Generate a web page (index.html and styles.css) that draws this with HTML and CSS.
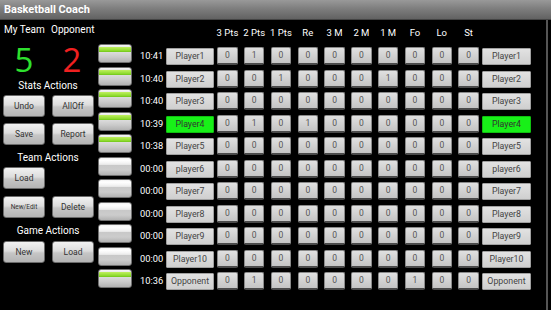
FILE: index.html
```html
<!DOCTYPE html>
<html>
<head>
<meta charset="utf-8">
<link rel="stylesheet" href="styles.css">
</head>
<body>
<div class="titlebar">Basketball Coach</div>
<div class="main">
  <div class="left">
    <div class="labels"><span>My Team</span><span>Opponent</span></div>
    <div class="scores"><span class="my">5</span><span class="opp">2</span></div>
    <div class="sec sec-stats">Stats Actions</div>
    <div class="btn-row"><div class="btn">Undo</div><div class="btn">AllOff</div></div>
    <div class="btn-row gap6"><div class="btn">Save</div><div class="btn">Report</div></div>
    <div class="sec sec-team">Team Actions</div>
    <div class="btn-row"><div class="btn">Load</div></div>
    <div class="btn-row gap7"><div class="btn small">New/Edit</div><div class="btn">Delete</div></div>
    <div class="sec sec-game">Game Actions</div>
    <div class="btn-row"><div class="btn">New</div><div class="btn">Load</div></div>
  </div>
  <div class="table">
    <div class="row head">
      <div class="blank3"></div>
      <div class="h">3 Pts</div><div class="h">2 Pts</div><div class="h">1 Pts</div><div class="h">Re</div><div class="h">3 M</div><div class="h">2 M</div><div class="h">1 M</div><div class="h">Fo</div><div class="h">Lo</div><div class="h">St</div>
      <div></div>
    </div>
    <div class="row"><div class="tg on"></div><div class="time">10:41</div><div class="pb">Player1</div><div class="sc"><span>0</span></div><div class="sc"><span>1</span></div><div class="sc"><span>0</span></div><div class="sc"><span>0</span></div><div class="sc"><span>0</span></div><div class="sc"><span>0</span></div><div class="sc"><span>0</span></div><div class="sc"><span>0</span></div><div class="sc"><span>0</span></div><div class="sc"><span>0</span></div><div class="pb right">Player1</div></div>
    <div class="row"><div class="tg on"></div><div class="time">10:40</div><div class="pb">Player2</div><div class="sc"><span>0</span></div><div class="sc"><span>0</span></div><div class="sc"><span>1</span></div><div class="sc"><span>0</span></div><div class="sc"><span>0</span></div><div class="sc"><span>0</span></div><div class="sc"><span>1</span></div><div class="sc"><span>0</span></div><div class="sc"><span>0</span></div><div class="sc"><span>0</span></div><div class="pb right">Player2</div></div>
    <div class="row"><div class="tg on"></div><div class="time">10:40</div><div class="pb">Player3</div><div class="sc"><span>0</span></div><div class="sc"><span>0</span></div><div class="sc"><span>0</span></div><div class="sc"><span>0</span></div><div class="sc"><span>0</span></div><div class="sc"><span>0</span></div><div class="sc"><span>0</span></div><div class="sc"><span>0</span></div><div class="sc"><span>0</span></div><div class="sc"><span>0</span></div><div class="pb right">Player3</div></div>
    <div class="row"><div class="tg on"></div><div class="time">10:39</div><div class="pb active">Player4</div><div class="sc"><span>0</span></div><div class="sc"><span>1</span></div><div class="sc"><span>0</span></div><div class="sc"><span>1</span></div><div class="sc"><span>0</span></div><div class="sc"><span>0</span></div><div class="sc"><span>0</span></div><div class="sc"><span>0</span></div><div class="sc"><span>0</span></div><div class="sc"><span>0</span></div><div class="pb right active">Player4</div></div>
    <div class="row"><div class="tg on"></div><div class="time">10:38</div><div class="pb">Player5</div><div class="sc"><span>0</span></div><div class="sc"><span>0</span></div><div class="sc"><span>0</span></div><div class="sc"><span>0</span></div><div class="sc"><span>0</span></div><div class="sc"><span>0</span></div><div class="sc"><span>0</span></div><div class="sc"><span>0</span></div><div class="sc"><span>0</span></div><div class="sc"><span>0</span></div><div class="pb right">Player5</div></div>
    <div class="row"><div class="tg"></div><div class="time">00:00</div><div class="pb">player6</div><div class="sc"><span>0</span></div><div class="sc"><span>0</span></div><div class="sc"><span>0</span></div><div class="sc"><span>0</span></div><div class="sc"><span>0</span></div><div class="sc"><span>0</span></div><div class="sc"><span>0</span></div><div class="sc"><span>0</span></div><div class="sc"><span>0</span></div><div class="sc"><span>0</span></div><div class="pb right">player6</div></div>
    <div class="row"><div class="tg"></div><div class="time">00:00</div><div class="pb">Player7</div><div class="sc"><span>0</span></div><div class="sc"><span>0</span></div><div class="sc"><span>0</span></div><div class="sc"><span>0</span></div><div class="sc"><span>0</span></div><div class="sc"><span>0</span></div><div class="sc"><span>0</span></div><div class="sc"><span>0</span></div><div class="sc"><span>0</span></div><div class="sc"><span>0</span></div><div class="pb right">Player7</div></div>
    <div class="row"><div class="tg"></div><div class="time">00:00</div><div class="pb">Player8</div><div class="sc"><span>0</span></div><div class="sc"><span>0</span></div><div class="sc"><span>0</span></div><div class="sc"><span>0</span></div><div class="sc"><span>0</span></div><div class="sc"><span>0</span></div><div class="sc"><span>0</span></div><div class="sc"><span>0</span></div><div class="sc"><span>0</span></div><div class="sc"><span>0</span></div><div class="pb right">Player8</div></div>
    <div class="row"><div class="tg"></div><div class="time">00:00</div><div class="pb">Player9</div><div class="sc"><span>0</span></div><div class="sc"><span>0</span></div><div class="sc"><span>0</span></div><div class="sc"><span>0</span></div><div class="sc"><span>0</span></div><div class="sc"><span>0</span></div><div class="sc"><span>0</span></div><div class="sc"><span>0</span></div><div class="sc"><span>0</span></div><div class="sc"><span>0</span></div><div class="pb right">Player9</div></div>
    <div class="row"><div class="tg"></div><div class="time">00:00</div><div class="pb">Player10</div><div class="sc"><span>0</span></div><div class="sc"><span>0</span></div><div class="sc"><span>0</span></div><div class="sc"><span>0</span></div><div class="sc"><span>0</span></div><div class="sc"><span>0</span></div><div class="sc"><span>0</span></div><div class="sc"><span>0</span></div><div class="sc"><span>0</span></div><div class="sc"><span>0</span></div><div class="pb right">Player10</div></div>
    <div class="row"><div class="tg on"></div><div class="time">10:36</div><div class="pb">Opponent</div><div class="sc"><span>0</span></div><div class="sc"><span>1</span></div><div class="sc"><span>0</span></div><div class="sc"><span>0</span></div><div class="sc"><span>0</span></div><div class="sc"><span>0</span></div><div class="sc"><span>0</span></div><div class="sc"><span>1</span></div><div class="sc"><span>0</span></div><div class="sc"><span>0</span></div><div class="pb right">Opponent</div></div>
  </div>
</div>
</body>
</html>
```
FILE: styles.css
```css
html, body {
  margin: 0;
  padding: 0;
  background: #000;
}
body {
  width: 551px;
  height: 310px;
  overflow: hidden;
  font-family: Roboto, "Open Sans", sans-serif;
  color: #fff;
}
.titlebar {
  height: 20px;
  box-sizing: border-box;
  padding-left: 4px;
  line-height: 19px;
  font-size: 11px;
  font-weight: bold;
  color: #fff;
  background: linear-gradient(to bottom, #999 0%, #7e7e7e 45%, #626262 100%);
  border-bottom: 1px solid #444;
}
.main {
  display: flex;
  width: 548px;
  height: 290px;
  border-right: 2px solid #555;
  box-sizing: border-box;
}
.left {
  width: 98px;
  flex: none;
  display: flex;
  flex-direction: column;
}
.labels {
  height: 23px;
  display: grid;
  grid-template-columns: 47px 47px;
  padding-left: 4px;
  line-height: 20px;
  font-size: 10px;
  color: #fff;
}
.scores {
  height: 34px;
  display: grid;
  grid-template-columns: 48px 48px;
  text-align: center;
  font-family: "Open Sans", sans-serif;
  font-size: 33px;
  line-height: 34px;
}
.my { color: #2ee02e; }
.opp { color: #f02020; }
.sec {
  font-size: 10px;
  text-align: center;
  width: 96px;
  color: #fff;
}
.sec-stats { height: 18px; line-height: 18px; }
.sec-team { height: 17px; padding-top: 5px; line-height: 16px; }
.sec-game { height: 18px; padding-top: 5px; line-height: 16px; }
.btn-row {
  display: flex;
  gap: 7px;
  padding-left: 3px;
}
.gap6 { margin-top: 6px; }
.gap7 { margin-top: 7px; }
.btn {
  width: 42px;
  height: 22px;
  box-sizing: border-box;
  border-radius: 3px;
  border: 1px solid #6a6a6a;
  background: linear-gradient(to bottom, #f2f2f2 0%, #dcdcdc 45%, #c6c6c6 55%, #b4b4b4 100%);
  color: #333;
  font-size: 8.5px;
  line-height: 20px;
  text-align: center;
}
.btn.small { font-size: 6.5px; }
.table {
  display: flex;
  flex-direction: column;
}
.row {
  display: grid;
  grid-template-columns: 34px 34px 48px repeat(10, 26.8px) 49px;
  height: 22.5px;
  align-items: start;
}
.row.head {
  height: 25px;
  align-items: center;
}
.blank3 { grid-column: span 3; }
.h {
  text-align: center;
  font-size: 9.5px;
  line-height: 25px;
  color: #fff;
}
.tg {
  width: 34px;
  height: 19px;
  margin-top: -1px;
  box-sizing: border-box;
  border-radius: 3px;
  border: 1px solid #707070;
  background: linear-gradient(to bottom, #f6f6f6 0px, #e8e8e8 2px, #c0f060 2px, #88d828 6px, #6cc018 7px, #dcdcdc 7px, #cacaca 12px, #b2b2b2 17px);
}
.tg:not(.on) {
  background: linear-gradient(to bottom, #f2f2f2 0px, #ffffff 2px, #f4f4f4 5px, #e4e4e4 7px, #c8c8c8 7px, #cccccc 12px, #b2b2b2 17px);
}
.time {
  padding-left: 8px;
  font-size: 9.3px;
  line-height: 22px;
  color: #fff;
}
.pb {
  margin-top: 3px;
  height: 17px;
  box-sizing: border-box;
  border: 1px solid #a0a0a0;
  border-radius: 1px;
  background: linear-gradient(to bottom, #e2e2e2, #cfcfcf);
  color: #444;
  font-size: 8.8px;
  line-height: 15px;
  text-align: center;
}
.pb.active {
  background: #18f018;
  border-color: #10c010;
  color: #333;
}
.sc {
  display: flex;
  justify-content: center;
}
.sc span {
  margin-top: 2px;
  width: 20.5px;
  height: 18px;
  box-sizing: border-box;
  border-radius: 2px;
  border: 1px solid #8a8a8a;
  border-bottom: 2px solid #4a4a4a;
  background: linear-gradient(to bottom, #e0e0e0, #c4c4c4);
  color: #555;
  font-size: 8.5px;
  line-height: 15px;
  text-align: center;
}
```
